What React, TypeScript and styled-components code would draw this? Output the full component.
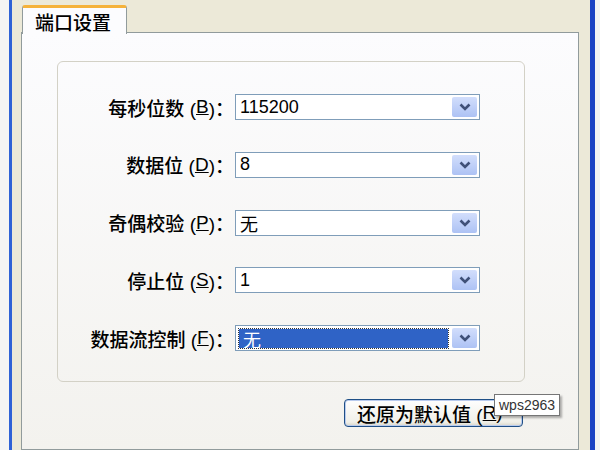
import React from "react";
import styled, { createGlobalStyle } from "styled-components";

const GlobalStyle = createGlobalStyle`
  html, body {
    margin: 0;
    padding: 0;
  }
  body {
    width: 600px;
    height: 450px;
    overflow: hidden;
    background: #f4f4f4;
    font-family: "Liberation Sans", "Noto Sans CJK SC", sans-serif;
  }
`;

const Screen = styled.div`
  width: 600px;
  height: 450px;
  display: flex;
  padding: 0 5px 0 9px;
  box-sizing: border-box;
`;

const Window = styled.div`
  flex: 1;
  display: flex;
  flex-direction: column;
  background: #ece9d8;
  border-left: 3px solid #2f62d6;
  border-right: 5px solid #1d44c4;
  padding: 5px 11px 0 9px;
  box-sizing: border-box;
`;

const TabStrip = styled.div`
  display: flex;
  height: 28px;
  padding-left: 1px;
  margin-bottom: -1px;
  position: relative;
  z-index: 1;
`;

const Tab = styled.div`
  width: 105px;
  height: 29px;
  box-sizing: border-box;
  background: #fcfcfe;
  border: 1px solid #919b9c;
  border-top: 3px solid #f5b23a;
  border-bottom: none;
  border-radius: 3px 3px 0 0;
  padding-left: 12px;
  display: flex;
  align-items: center;
  font-size: 19px;
  font-weight: 500;
  color: #000;
`;

const Panel = styled.div`
  flex: 1;
  border: 1px solid #919b9c;
  background: linear-gradient(#fcfcfe, #f3f2ee);
  padding: 28px 53px 0 35px;
`;

const GroupBox = styled.div`
  height: 321px;
  box-sizing: border-box;
  border: 1px solid #d3d1c6;
  border-radius: 6px;
  padding-top: 32px;
  display: grid;
  grid-template-columns: 176px 245px;
  grid-auto-rows: 26px;
  column-gap: 1px;
  row-gap: 31.75px;
`;

const Label = styled.div`
  display: flex;
  align-items: center;
  justify-content: flex-end;
  font-size: 19px;
  font-weight: 500;
  color: #000;
  white-space: nowrap;
`;

const Combo = styled.div`
  display: flex;
  border: 1px solid #7f9db9;
  background: #fff;
`;

const Value = styled.div<{ $selected?: boolean }>`
  flex: 1;
  display: flex;
  align-items: center;
  font-size: 18px;
  color: ${(p) => (p.$selected ? "#fff" : "#000")};
  padding-left: 4px;
  margin: ${(p) => (p.$selected ? "3px 4px 2px 3px" : "0")};
  background: ${(p) => (p.$selected ? "#2f63c6" : "transparent")};
  outline: ${(p) => (p.$selected ? "1px dotted #333" : "none")};
`;

const DropButton = styled.div`
  width: 25px;
  margin: 2px 2px 2px 0;
  border-radius: 2px;
  background: linear-gradient(#d2defc, #adc2f4);
  display: flex;
  align-items: center;
  justify-content: center;
`;

const ButtonRow = styled.div`
  display: flex;
  justify-content: flex-end;
  margin-top: 17px;
  padding-right: 2px;
`;

const PushButton = styled.div`
  position: relative;
  width: 179px;
  height: 28px;
  box-sizing: border-box;
  border: 1px solid #1f4f86;
  border-radius: 4px;
  background: linear-gradient(#fefefe, #f0efe8 85%, #d8d5c8);
  box-shadow: inset 0 0 0 1px #b9cbee;
  padding-left: 12px;
  display: flex;
  align-items: center;
  font-size: 19px;
  font-weight: 500;
  color: #000;
  white-space: nowrap;
`;

const Tooltip = styled.div`
  position: absolute;
  left: 149px;
  top: -6px;
  height: 22px;
  padding: 0 4px;
  box-sizing: border-box;
  border: 1px solid #767676;
  background: #fff;
  box-shadow: 2px 2px 2px rgba(0, 0, 0, 0.3);
  display: flex;
  align-items: center;
  font-size: 14px;
  font-weight: normal;
  color: #333;
`;

function Chevron() {
  return (
    <svg width="14" height="10" viewBox="0 0 14 10">
      <path d="M2.5 2.5 L7 7 L11.5 2.5" fill="none" stroke="#3f5078" strokeWidth="2.6" />
    </svg>
  );
}

const rows = [
  { label: "每秒位数", key: "B", value: "115200" },
  { label: "数据位", key: "D", value: "8" },
  { label: "奇偶校验", key: "P", value: "无" },
  { label: "停止位", key: "S", value: "1" },
  { label: "数据流控制", key: "F", value: "无", selected: true },
];

export default function App() {
  return (
    <>
      <GlobalStyle />
      <Screen>
        <Window>
          <TabStrip>
            <Tab>端口设置</Tab>
          </TabStrip>
          <Panel>
            <GroupBox>
              {rows.map((r) => (
                <React.Fragment key={r.key}>
                  <Label>
                    {r.label} (<u>{r.key}</u>)：
                  </Label>
                  <Combo>
                    <Value $selected={r.selected}>{r.value}</Value>
                    <DropButton>
                      <Chevron />
                    </DropButton>
                  </Combo>
                </React.Fragment>
              ))}
            </GroupBox>
            <ButtonRow>
              <PushButton>
                还原为默认值 (<u>R</u>)
                <Tooltip>wps2963</Tooltip>
              </PushButton>
            </ButtonRow>
          </Panel>
        </Window>
      </Screen>
    </>
  );
}
